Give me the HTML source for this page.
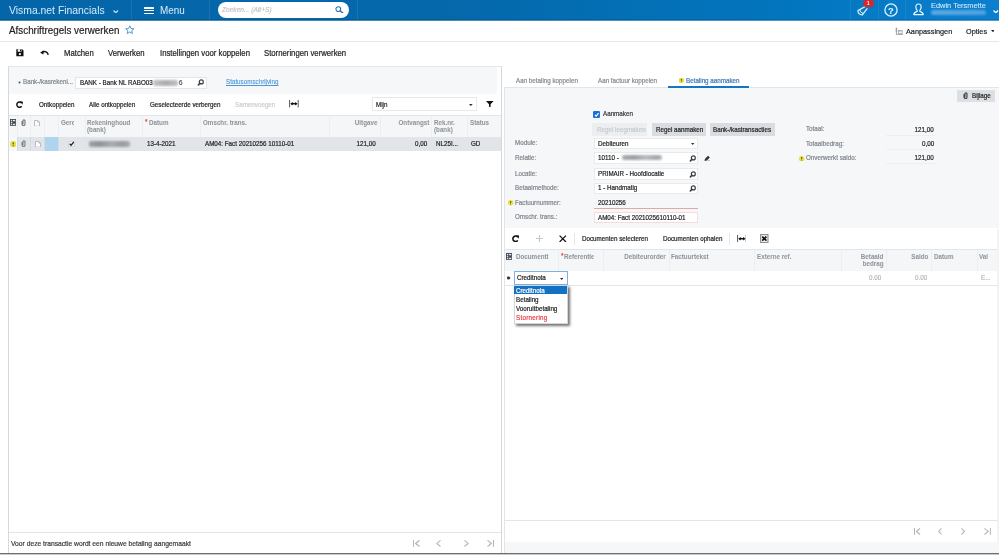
<!DOCTYPE html>
<html lang="nl">
<head>
<meta charset="utf-8">
<title>Afschriftregels verwerken</title>
<style>
*{box-sizing:border-box;margin:0;padding:0}
html,body{width:999px;height:555px;overflow:hidden;background:#fff}
body{font-family:"Liberation Sans",sans-serif;position:relative}
.t{position:absolute;white-space:nowrap;-webkit-text-stroke:0.2px}
.r{position:absolute;display:block}
</style>
</head>
<body>
<div class="r" style="left:0.00px;top:0.00px;width:999.00px;height:20.00px;background:linear-gradient(to right,#0466a8 0%,#0568ab 45%,#0276bf 80%,#0c80cf 100%);"></div>
<div class="r" style="left:0.00px;top:19.00px;width:999.00px;height:1.00px;background:rgba(0,0,0,0.10);"></div>
<div class="r" style="left:0.00px;top:20.00px;width:999.00px;height:1.00px;background:linear-gradient(to right,#4b87b4 0%,#4c89b7 45%,#579bd4 100%);"></div>
<div class="t" style="top:3px;font-size:11.232px;line-height:14px;height:14px;color:#d4ebfb;left:8.50px;transform:scaleX(0.9259);transform-origin:0 50%;-webkit-text-stroke:0;">Visma.net Financials</div>
<svg class="r" style="left:113.30px;top:9.70px" width="5.6" height="3.4" viewBox="0 0 5.6 3.4"><path d="M0.5 0.5 L2.8 2.8 L5.1 0.5" fill="none" stroke="#b5e0fa" stroke-width="1.25"/></svg>
<div class="r" style="left:131.00px;top:0.00px;width:1.00px;height:20.00px;background:rgba(255,255,255,0.09);"></div>
<div class="r" style="left:209.00px;top:0.00px;width:1.00px;height:20.00px;background:rgba(255,255,255,0.09);"></div>
<div class="r" style="left:357.00px;top:0.00px;width:1.00px;height:20.00px;background:rgba(255,255,255,0.09);"></div>
<div class="r" style="left:143.80px;top:7.30px;width:9.80px;height:1.40px;background:#fff;border-radius:0.5px;"></div>
<div class="r" style="left:143.80px;top:9.90px;width:9.80px;height:1.40px;background:#fff;border-radius:0.5px;"></div>
<div class="r" style="left:143.80px;top:12.50px;width:9.80px;height:1.40px;background:#fff;border-radius:0.5px;"></div>
<div class="t" style="top:3px;font-size:10.692px;line-height:14px;height:14px;color:#d8edfb;left:159.80px;transform:scaleX(0.9259);transform-origin:0 50%;-webkit-text-stroke:0;">Menu</div>
<div class="r" style="left:218.30px;top:1.60px;width:131.00px;height:16.20px;background:#fff;border-radius:8.1px;"></div>
<div class="t" style="top:5px;font-size:7.128px;line-height:10px;height:10px;color:#c3c3c6;left:222.20px;transform:scaleX(0.9259);transform-origin:0 50%;font-style:italic;">Zoeken... (Alt+S)</div>
<svg class="r" style="left:334.80px;top:5.50px" width="8.8" height="7.6" viewBox="0 0 8.8 7.6"><circle cx="3.3" cy="3.1" r="2.4" fill="none" stroke="#2a6fb3" stroke-width="1.05"/><path d="M5.1 4.9 L8 7" stroke="#2a6fb3" stroke-width="1.3" stroke-linecap="round"/></svg>
<div class="r" style="left:850.00px;top:0.00px;width:1.00px;height:20.00px;background:rgba(255,255,255,0.07);"></div>
<div class="r" style="left:877.50px;top:0.00px;width:1.00px;height:20.00px;background:rgba(255,255,255,0.07);"></div>
<div class="r" style="left:905.00px;top:0.00px;width:1.00px;height:20.00px;background:rgba(255,255,255,0.07);"></div>
<svg class="r" style="left:856.60px;top:6.40px" width="11" height="10" viewBox="0 0 11 10"><path d="M8.4 0.4 L0.9 4.6 Q1.0 8.6 5.2 9.0 L10.4 2.4" fill="none" stroke="#d6eefc" stroke-width="1.25" stroke-linejoin="round"/><path d="M2.7 3.9 Q3.2 6.6 6.1 7.3" fill="none" stroke="#d6eefc" stroke-width="1.0"/></svg>
<div class="r" style="left:862.50px;top:0.00px;width:11.60px;height:7.20px;background:#d7262e;border-radius:3.6px;"></div>
<div class="t" style="top:0px;font-size:4.752px;line-height:7px;height:7px;color:#fff;left:867.30px;transform:scaleX(0.9259);transform-origin:0 50%;font-weight:bold;-webkit-text-stroke:0.05px;">1</div>
<svg class="r" style="left:884.20px;top:3.40px" width="14" height="14" viewBox="0 0 14 14"><circle cx="7" cy="7" r="6.1" fill="none" stroke="#d9effc" stroke-width="1.35"/></svg>
<div class="t" style="top:4px;font-size:9.409px;line-height:13px;height:13px;color:#e6f4fd;left:888.30px;transform:scaleX(0.9990);transform-origin:0 50%;font-weight:bold;-webkit-text-stroke:0.05px;">?</div>
<svg class="r" style="left:913.00px;top:3.20px" width="11.0" height="12.6" viewBox="0 0 11.8 12.8"><path d="M5.9 0.7 C8.2 0.7 8.9 2.4 8.7 4.4 C8.5 6.2 7.9 7 7.3 7.6 L7.3 8.6 C9 9.2 10.8 9.8 11 12.1 H0.8 C1 9.8 2.8 9.2 4.5 8.6 L4.5 7.6 C3.9 7 3.3 6.2 3.1 4.4 C2.9 2.4 3.6 0.7 5.9 0.7 Z" fill="none" stroke="#e3f3fd" stroke-width="1.3" stroke-linejoin="round"/></svg>
<div class="t" style="top:0px;font-size:8.046px;line-height:11px;height:11px;color:#cfe9fb;left:930.80px;transform:scaleX(0.9259);transform-origin:0 50%;-webkit-text-stroke:0.1px;">Edwin Tersmette</div>
<div class="r" style="left:930.50px;top:10.00px;width:55.00px;height:5.40px;background:linear-gradient(to right,rgba(120,185,235,0.75),rgba(95,170,228,0.8));border-radius:2.5px;filter:blur(1.1px);"></div>
<svg class="r" style="left:993.20px;top:9.60px" width="5.6" height="3.4" viewBox="0 0 5.6 3.4"><path d="M0.5 0.5 L2.8 2.8 L5.1 0.5" fill="none" stroke="#fff" stroke-width="1.3"/></svg>
<div class="t" style="top:23px;font-size:10.638px;line-height:14px;height:14px;color:#1f1f1f;left:8.90px;transform:scaleX(0.9259);transform-origin:0 50%;">Afschriftregels verwerken</div>
<svg class="r" style="left:125.00px;top:25.00px" width="9.6" height="9" viewBox="0 0 9.6 9"><path d="M4.8 0.8 L6 3.5 L8.9 3.8 L6.7 5.7 L7.4 8.5 L4.8 7 L2.2 8.5 L2.9 5.7 L0.7 3.8 L3.6 3.5 Z" fill="none" stroke="#3d8fd0" stroke-width="0.9" stroke-linejoin="round"/></svg>
<svg class="r" style="left:894.80px;top:26.60px" width="8.6" height="8.2" viewBox="0 0 8.6 8.2"><path d="M1.4 0.6 V7.4 H8.2" fill="none" stroke="#8a8a8a" stroke-width="0.8"/><path d="M0.4 1.8 H2.4 M0.4 4 H2.4" stroke="#8a8a8a" stroke-width="0.7"/><rect x="3.4" y="3.4" width="3.8" height="3" fill="none" stroke="#9a9a9a" stroke-width="0.7"/><path d="M3.6 3.6 L5.3 5 L7 3.6" fill="none" stroke="#9a9a9a" stroke-width="0.6"/></svg>
<div class="t" style="top:26px;font-size:7.884px;line-height:11px;height:11px;color:#222;left:906.00px;transform:scaleX(0.9259);transform-origin:0 50%;">Aanpassingen</div>
<div class="t" style="top:26px;font-size:7.884px;line-height:11px;height:11px;color:#222;left:966.00px;transform:scaleX(0.9259);transform-origin:0 50%;">Opties</div>
<svg class="r" style="left:990.60px;top:30.00px" width="3.8" height="2.2" viewBox="0 0 3.8 2.2"><path d="M0 0 H3.8 L1.9 2.2 Z" fill="#222"/></svg>
<div class="r" style="left:0.00px;top:41.00px;width:999.00px;height:1.00px;background:#e6e8ea;"></div>
<svg class="r" style="left:16.00px;top:49.00px" width="8" height="7.9" viewBox="0 0 8 7.9"><path d="M0.3 0.3 H6.2 L7.5 1.6 V7.3 H0.3 Z" fill="#111"/><rect x="1.7" y="0.3" width="3.8" height="2.4" fill="#fff"/><rect x="4" y="0.6" width="1" height="1.7" fill="#111"/><circle cx="3.9" cy="5.1" r="1.1" fill="#fff"/></svg>
<svg class="r" style="left:40.00px;top:50.40px" width="8.8" height="5.2" viewBox="0 0 8.8 5.2"><path d="M2.8 2.0 C5.2 0.9 7.4 1.8 8.3 4.7" fill="none" stroke="#111" stroke-width="1.45"/><path d="M0.1 2.7 L3.5 0.3 L3.5 4.6 Z" fill="#111"/></svg>
<div class="t" style="top:47px;font-size:8.370px;line-height:12px;height:12px;color:#222;left:63.80px;transform:scaleX(0.9259);transform-origin:0 50%;">Matchen</div>
<div class="t" style="top:47px;font-size:8.370px;line-height:12px;height:12px;color:#222;left:108.40px;transform:scaleX(0.9259);transform-origin:0 50%;">Verwerken</div>
<div class="t" style="top:47px;font-size:8.370px;line-height:12px;height:12px;color:#222;left:159.80px;transform:scaleX(0.9259);transform-origin:0 50%;">Instellingen voor koppelen</div>
<div class="t" style="top:47px;font-size:8.370px;line-height:12px;height:12px;color:#222;left:264.40px;transform:scaleX(0.9259);transform-origin:0 50%;">Storneringen verwerken</div>
<div class="r" style="left:8.00px;top:66.00px;width:494.00px;height:488.00px;background:#fff;border:1px solid #e2e5e9;border-left-color:#d5d8dc;border-right-color:#d4d7db;border-bottom:none;"></div>
<div class="r" style="left:9.00px;top:67.00px;width:487.50px;height:27.00px;background:#f5f7f9;"></div>
<svg class="r" style="left:17.60px;top:80.80px" width="3" height="3" viewBox="0 0 3 3"><circle cx="1.5" cy="1.5" r="1.05" fill="#555"/></svg>
<div class="t" style="top:77px;font-size:6.750px;line-height:9px;height:9px;color:#7f868d;left:23.20px;transform:scaleX(0.9259);transform-origin:0 50%;">Bank-/kasrekeni...</div>
<div class="r" style="left:75.20px;top:77.40px;width:131.80px;height:11.40px;background:#fff;border:1px solid #e2e5e9;"></div>
<div class="t" style="top:78px;font-size:6.750px;line-height:9px;height:9px;color:#222;left:79.50px;transform:scaleX(0.9259);transform-origin:0 50%;">BANK - Bank NL RABO03</div>
<div class="r" style="left:153.00px;top:80.00px;width:25.00px;height:5.60px;background:linear-gradient(to right,#c4c4c4,#ababab 50%,#c0c0c0);border-radius:2px;filter:blur(0.9px);"></div>
<div class="t" style="top:78px;font-size:6.750px;line-height:9px;height:9px;color:#555;left:178.60px;transform:scaleX(0.9259);transform-origin:0 50%;">6</div>
<svg class="r" style="left:197.20px;top:79.00px" width="7" height="7" viewBox="0 0 7 7"><circle cx="4.3" cy="2.9" r="2.0" fill="none" stroke="#3a3a3a" stroke-width="1.15"/><path d="M2.9 4.4 L1.3 6.0" stroke="#3a3a3a" stroke-width="1.5" stroke-linecap="round"/></svg>
<div class="t" style="top:77px;font-size:6.750px;line-height:9px;height:9px;color:#4a96d6;left:226.00px;transform:scaleX(0.9259);transform-origin:0 50%;text-decoration:underline;-webkit-text-stroke:0.1px;">Statusomschrijving</div>
<svg class="r" style="left:16.40px;top:101.00px" width="7.0" height="7.0" viewBox="0 0 10 10"><path d="M7.9 2.8 A3.8 3.8 0 1 0 8.1 7.5" fill="none" stroke="#111" stroke-width="2.1"/><path d="M5.8 0.2 L10 0.9 L9.2 5.2 Z" fill="#111"/></svg>
<div class="t" style="top:100px;font-size:6.750px;line-height:9px;height:9px;color:#222;left:39.20px;transform:scaleX(0.9259);transform-origin:0 50%;">Ontkoppelen</div>
<div class="t" style="top:100px;font-size:6.750px;line-height:9px;height:9px;color:#222;left:89.00px;transform:scaleX(0.9259);transform-origin:0 50%;">Alle ontkoppelen</div>
<div class="t" style="top:100px;font-size:6.750px;line-height:9px;height:9px;color:#222;left:150.00px;transform:scaleX(0.9259);transform-origin:0 50%;">Geselecteerde verbergen</div>
<div class="t" style="top:100px;font-size:6.750px;line-height:9px;height:9px;color:#c9cdd1;left:235.00px;transform:scaleX(0.9259);transform-origin:0 50%;">Samenvoegen</div>
<svg class="r" style="left:289.00px;top:100.20px" width="9.8" height="7.4" viewBox="0 0 9.8 7.4"><path d="M0.6 0 V7.4 M9.2 0 V7.4" stroke="#555" stroke-width="1"/><path d="M2.2 3.7 H7.6" stroke="#111" stroke-width="1.5"/><path d="M1.3 3.7 L3.7 1.9 V5.5 Z M8.5 3.7 L6.1 1.9 V5.5 Z" fill="#111"/></svg>
<div class="r" style="left:372.40px;top:97.20px;width:104.80px;height:14.00px;background:#fff;border:1px solid #e6e9ec;"></div>
<div class="t" style="top:100px;font-size:6.750px;line-height:9px;height:9px;color:#222;left:376.00px;transform:scaleX(0.9259);transform-origin:0 50%;">Mijn</div>
<svg class="r" style="left:469.30px;top:103.60px" width="3.7" height="2.1" viewBox="0 0 3.7 2.1"><path d="M0 0 H3.7 L1.85 2.1 Z" fill="#333"/></svg>
<svg class="r" style="left:486.20px;top:100.70px" width="7.6" height="6.4" viewBox="0 0 7.6 6.4"><path d="M0 0 H7.6 L4.6 3.2 V6.4 L3 5.6 V3.2 Z" fill="#111"/></svg>
<div class="r" style="left:9.00px;top:115.00px;width:492.00px;height:21.70px;background:#f5f6f8;border-top:1px solid #e2e5e9;"></div>
<div class="r" style="left:16.50px;top:116.00px;width:1.00px;height:20.70px;background:#eceef1;"></div>
<div class="r" style="left:30.30px;top:116.00px;width:1.00px;height:20.70px;background:#eceef1;"></div>
<div class="r" style="left:44.00px;top:116.00px;width:1.00px;height:20.70px;background:#eceef1;"></div>
<div class="r" style="left:58.30px;top:116.00px;width:1.00px;height:20.70px;background:#eceef1;"></div>
<div class="r" style="left:84.50px;top:116.00px;width:1.00px;height:20.70px;background:#eceef1;"></div>
<div class="r" style="left:142.30px;top:116.00px;width:1.00px;height:20.70px;background:#eceef1;"></div>
<div class="r" style="left:200.00px;top:116.00px;width:1.00px;height:20.70px;background:#eceef1;"></div>
<div class="r" style="left:329.00px;top:116.00px;width:1.00px;height:20.70px;background:#eceef1;"></div>
<div class="r" style="left:380.00px;top:116.00px;width:1.00px;height:20.70px;background:#eceef1;"></div>
<div class="r" style="left:431.30px;top:116.00px;width:1.00px;height:20.70px;background:#eceef1;"></div>
<div class="r" style="left:467.00px;top:116.00px;width:1.00px;height:20.70px;background:#eceef1;"></div>
<svg class="r" style="left:10.00px;top:119.30px" width="6.2" height="6.8" viewBox="0 0 6.2 6.8"><rect x="0.45" y="0.45" width="5.3" height="5.9" fill="#f2f3f5" stroke="#3c4650" stroke-width="0.9"/><path d="M0.4 2.4 H5.8 M0.4 4.4 H5.8 M2.5 0.4 V6.4" stroke="#3c4650" stroke-width="0.75"/><rect x="3" y="2.8" width="2.4" height="1.4" fill="#3c4650"/></svg>
<svg class="r" style="left:21.00px;top:119.10px" width="5.0" height="7.2" viewBox="0 0 4.9 7.0"><path d="M1 2.4 V5 A1.45 1.45 0 0 0 3.9 5 V1.8 A1 1 0 0 0 1.9 1.8 V4.7" fill="none" stroke="#737b84" stroke-width="1.15" stroke-linecap="round"/></svg>
<svg class="r" style="left:34.40px;top:119.60px" width="6" height="6.6" viewBox="0 0 6 6.6"><path d="M0.5 0.5 H3.8 L5.5 2.2 V6.1 H0.5 Z" fill="#fff" stroke="#a7aeb5" stroke-width="0.8"/><path d="M3.8 0.5 V2.2 H5.5" fill="none" stroke="#a7aeb5" stroke-width="0.7"/></svg>
<div class="t" style="top:118px;font-size:6.750px;line-height:9px;height:9px;color:#90959b;left:61.20px;transform:scaleX(0.9259);transform-origin:0 50%;font-weight:bold;-webkit-text-stroke:0.05px;width:13.93px;overflow:hidden;">Gere</div>
<div class="t" style="top:118px;font-size:6.750px;line-height:9px;height:9px;color:#90959b;left:86.80px;transform:scaleX(0.9259);transform-origin:0 50%;font-weight:bold;-webkit-text-stroke:0.05px;">Rekeninghoud</div>
<div class="t" style="top:125px;font-size:6.750px;line-height:9px;height:9px;color:#90959b;left:86.80px;transform:scaleX(0.9259);transform-origin:0 50%;font-weight:bold;-webkit-text-stroke:0.05px;">(bank)</div>
<div class="t" style="top:117px;font-size:6.750px;line-height:9px;height:9px;color:#e03a3a;left:144.60px;transform:scaleX(0.9259);transform-origin:0 50%;font-weight:bold;-webkit-text-stroke:0.05px;">*</div>
<div class="t" style="top:118px;font-size:6.750px;line-height:9px;height:9px;color:#90959b;left:148.50px;transform:scaleX(0.9259);transform-origin:0 50%;font-weight:bold;-webkit-text-stroke:0.05px;">Datum</div>
<div class="t" style="top:118px;font-size:6.750px;line-height:9px;height:9px;color:#90959b;left:202.60px;transform:scaleX(0.9259);transform-origin:0 50%;font-weight:bold;-webkit-text-stroke:0.05px;">Omschr. trans.</div>
<div class="t" style="top:118px;font-size:6.750px;line-height:9px;height:9px;color:#90959b;right:621.60px;transform:scaleX(0.9259);transform-origin:100% 50%;font-weight:bold;-webkit-text-stroke:0.05px;">Uitgave</div>
<div class="t" style="top:118px;font-size:6.750px;line-height:9px;height:9px;color:#90959b;right:569.80px;transform:scaleX(0.9259);transform-origin:100% 50%;font-weight:bold;-webkit-text-stroke:0.05px;">Ontvangst</div>
<div class="t" style="top:118px;font-size:6.750px;line-height:9px;height:9px;color:#90959b;left:434.00px;transform:scaleX(0.9259);transform-origin:0 50%;font-weight:bold;-webkit-text-stroke:0.05px;">Rek.nr.</div>
<div class="t" style="top:125px;font-size:6.750px;line-height:9px;height:9px;color:#90959b;left:434.00px;transform:scaleX(0.9259);transform-origin:0 50%;font-weight:bold;-webkit-text-stroke:0.05px;">(bank)</div>
<div class="t" style="top:118px;font-size:6.750px;line-height:9px;height:9px;color:#90959b;left:469.60px;transform:scaleX(0.9259);transform-origin:0 50%;font-weight:bold;-webkit-text-stroke:0.05px;">Status</div>
<div class="r" style="left:17.00px;top:136.80px;width:484.00px;height:14.20px;background:#e1e5e9;"></div>
<div class="r" style="left:9.00px;top:136.70px;width:8.00px;height:14.00px;background:#f7f8fa;"></div>
<div class="r" style="left:44.40px;top:136.80px;width:14.60px;height:14.20px;background:#aed4f0;"></div>
<div class="r" style="left:16.50px;top:136.70px;width:1.00px;height:14.00px;background:#d5dade;"></div>
<div class="r" style="left:30.30px;top:136.70px;width:1.00px;height:14.00px;background:#d5dade;"></div>
<div class="r" style="left:44.00px;top:136.70px;width:1.00px;height:14.00px;background:#d5dade;"></div>
<div class="r" style="left:58.30px;top:136.70px;width:1.00px;height:14.00px;background:#d5dade;"></div>
<svg class="r" style="left:9.80px;top:140.50px" width="6.4" height="6.4" viewBox="0 0 10 10"><circle cx="5" cy="5" r="4.6" fill="#f2e63a" stroke="#d8cb1c" stroke-width="0.8"/><path d="M5 2.2 V5.6" stroke="#222" stroke-width="1.6"/><circle cx="5" cy="7.4" r="0.9" fill="#222"/></svg>
<svg class="r" style="left:21.20px;top:139.90px" width="5.0" height="7.2" viewBox="0 0 4.9 7.0"><path d="M1 2.4 V5 A1.45 1.45 0 0 0 3.9 5 V1.8 A1 1 0 0 0 1.9 1.8 V4.7" fill="none" stroke="#7b848d" stroke-width="1.15" stroke-linecap="round"/></svg>
<svg class="r" style="left:34.60px;top:140.50px" width="6" height="6.6" viewBox="0 0 6 6.6"><path d="M0.5 0.5 H3.8 L5.5 2.2 V6.1 H0.5 Z" fill="#fff" stroke="#a7aeb5" stroke-width="0.8"/><path d="M3.8 0.5 V2.2 H5.5" fill="none" stroke="#a7aeb5" stroke-width="0.7"/></svg>
<div class="r" style="left:68.20px;top:140.60px;width:6.80px;height:6.90px;background:#f4f5f7;border:1px solid #d4d8dc;"></div>
<svg class="r" style="left:69.00px;top:141.40px" width="5.4" height="5.4" viewBox="0 0 5.4 5.4"><path d="M0.7 2.8 L2.1 4.3 L4.8 0.9" fill="none" stroke="#222" stroke-width="1.3"/></svg>
<div class="r" style="left:88.50px;top:141.20px;width:41.00px;height:5.60px;background:linear-gradient(to right,#9ea2a6,#8f9397 25%,#a9acb0 55%,#979b9f 80%,#a6a9ad);border-radius:2px;filter:blur(1px);"></div>
<div class="t" style="top:139px;font-size:6.750px;line-height:9px;height:9px;color:#222;left:147.00px;transform:scaleX(0.9259);transform-origin:0 50%;">13-4-2021</div>
<div class="t" style="top:139px;font-size:6.750px;line-height:9px;height:9px;color:#222;left:205.00px;transform:scaleX(0.9259);transform-origin:0 50%;">AM04: Fact 20210256 10110-01</div>
<div class="t" style="top:139px;font-size:6.750px;line-height:9px;height:9px;color:#222;right:623.80px;transform:scaleX(0.9259);transform-origin:100% 50%;">121,00</div>
<div class="t" style="top:139px;font-size:6.750px;line-height:9px;height:9px;color:#222;right:572.20px;transform:scaleX(0.9259);transform-origin:100% 50%;">0,00</div>
<div class="t" style="top:139px;font-size:6.750px;line-height:9px;height:9px;color:#222;left:436.00px;transform:scaleX(0.9259);transform-origin:0 50%;">NL25I...</div>
<div class="t" style="top:139px;font-size:6.750px;line-height:9px;height:9px;color:#222;left:471.00px;transform:scaleX(0.9259);transform-origin:0 50%;">GD</div>
<div class="r" style="left:9.00px;top:532.00px;width:492.00px;height:1.00px;background:#e3e6e9;"></div>
<div class="t" style="top:538px;font-size:7.258px;line-height:11px;height:11px;color:#3a3a3a;left:10.80px;transform:scaleX(0.9259);transform-origin:0 50%;">Voor deze transactie wordt een nieuwe betaling aangemaakt</div>
<svg class="r" style="left:412.50px;top:540.35px" width="7.0" height="6.9" viewBox="0 0 7.0 6.9"><path d="M0.5 0 V6.9" stroke="#b3b6ba" stroke-width="1"/><path d="M6.5 0.4 L2.6 3.45 L6.5 6.5" fill="none" stroke="#b3b6ba" stroke-width="1.25"/></svg>
<svg class="r" style="left:435.50px;top:540.35px" width="5.0" height="6.9" viewBox="0 0 5.0 6.9"><path d="M4.5 0.4 L0.8 3.45 L4.5 6.5" fill="none" stroke="#b3b6ba" stroke-width="1.1"/></svg>
<svg class="r" style="left:464.00px;top:540.35px" width="5" height="6.9" viewBox="0 0 5 6.9"><path d="M0.5 0.4 L4.2 3.45 L0.5 6.5" fill="none" stroke="#b3b6ba" stroke-width="1.1"/></svg>
<svg class="r" style="left:487.00px;top:540.35px" width="7" height="6.9" viewBox="0 0 7 6.9"><path d="M0.5 0.4 L4.4 3.45 L0.5 6.5" fill="none" stroke="#b3b6ba" stroke-width="1.1"/><path d="M6.5 0 V6.9" stroke="#b3b6ba" stroke-width="1"/></svg>
<div class="t" style="top:76px;font-size:6.750px;line-height:9px;height:9px;color:#858a8f;left:515.60px;transform:scaleX(0.9259);transform-origin:0 50%;">Aan betaling koppelen</div>
<div class="t" style="top:76px;font-size:6.750px;line-height:9px;height:9px;color:#858a8f;left:598.40px;transform:scaleX(0.9259);transform-origin:0 50%;">Aan factuur koppelen</div>
<svg class="r" style="left:679.00px;top:77.90px" width="4.8" height="4.8" viewBox="0 0 10 10"><rect x="0.5" y="0.5" width="9" height="9" rx="1.6" fill="#f2e230" stroke="#d4c41a" stroke-width="1"/><path d="M5 2 V5.6" stroke="#222" stroke-width="1.7"/><circle cx="5" cy="7.5" r="0.95" fill="#222"/></svg>
<div class="t" style="top:76px;font-size:6.750px;line-height:9px;height:9px;color:#3a78b8;left:685.70px;transform:scaleX(0.9259);transform-origin:0 50%;">Betaling aanmaken</div>
<div class="r" style="left:504.00px;top:87.00px;width:495.00px;height:467.00px;background:#fff;border-left:1px solid #e2e5e9;border-top:1px solid #e2e5e9;"></div>
<div class="r" style="left:505.00px;top:88.00px;width:494.00px;height:140.30px;background:#f5f7f9;"></div>
<div class="r" style="left:668.00px;top:86.00px;width:81.00px;height:1.90px;background:#1873c4;"></div>
<div class="r" style="left:957.20px;top:89.60px;width:37.40px;height:12.40px;background:#dcdfe3;"></div>
<svg class="r" style="left:963.00px;top:92.20px" width="5.0" height="7.2" viewBox="0 0 4.9 7.0"><path d="M1 2.4 V5 A1.45 1.45 0 0 0 3.9 5 V1.8 A1 1 0 0 0 1.9 1.8 V4.7" fill="none" stroke="#444" stroke-width="1.15" stroke-linecap="round"/></svg>
<div class="t" style="top:91px;font-size:6.750px;line-height:9px;height:9px;color:#222;left:972.30px;transform:scaleX(0.9259);transform-origin:0 50%;">Bijlage</div>
<div class="r" style="left:593.40px;top:110.60px;width:7.10px;height:7.00px;background:#1b70d6;border-radius:1.3px;"></div>
<svg class="r" style="left:594.30px;top:111.50px" width="5.4" height="5.4" viewBox="0 0 5.4 5.4"><path d="M0.9 2.8 L2.2 4.2 L4.6 1.2" fill="none" stroke="#fff" stroke-width="1.15"/></svg>
<div class="t" style="top:109px;font-size:6.750px;line-height:9px;height:9px;color:#383838;left:602.80px;transform:scaleX(0.9259);transform-origin:0 50%;">Aanmaken</div>
<div class="r" style="left:592.10px;top:123.40px;width:55.00px;height:12.60px;background:#eceef0;"></div>
<div class="t" style="top:125px;font-size:6.750px;line-height:9px;height:9px;color:#c6cacf;left:596.60px;transform:scaleX(0.9259);transform-origin:0 50%;">Regel leegmaken</div>
<div class="r" style="left:651.50px;top:123.40px;width:54.60px;height:12.60px;background:#d9dce0;"></div>
<div class="t" style="top:125px;font-size:6.750px;line-height:9px;height:9px;color:#222;left:656.20px;transform:scaleX(0.9259);transform-origin:0 50%;">Regel aanmaken</div>
<div class="r" style="left:709.60px;top:123.40px;width:65.80px;height:12.60px;background:#d9dce0;"></div>
<div class="t" style="top:125px;font-size:6.750px;line-height:9px;height:9px;color:#222;left:713.30px;transform:scaleX(0.9259);transform-origin:0 50%;">Bank-/kastransacties</div>
<div class="t" style="top:138px;font-size:6.750px;line-height:9px;height:9px;color:#7f868d;left:515.00px;transform:scaleX(0.9259);transform-origin:0 50%;">Module:</div>
<div class="t" style="top:153px;font-size:6.750px;line-height:9px;height:9px;color:#7f868d;left:515.00px;transform:scaleX(0.9259);transform-origin:0 50%;">Relatie:</div>
<div class="t" style="top:169px;font-size:6.750px;line-height:9px;height:9px;color:#7f868d;left:515.00px;transform:scaleX(0.9259);transform-origin:0 50%;">Locatie:</div>
<div class="t" style="top:183px;font-size:6.750px;line-height:9px;height:9px;color:#7f868d;left:515.00px;transform:scaleX(0.9259);transform-origin:0 50%;">Betaalmethode:</div>
<div class="t" style="top:198px;font-size:6.750px;line-height:9px;height:9px;color:#7f868d;left:515.00px;transform:scaleX(0.9259);transform-origin:0 50%;">Factuurnummer:</div>
<div class="t" style="top:212px;font-size:6.750px;line-height:9px;height:9px;color:#7f868d;left:515.00px;transform:scaleX(0.9259);transform-origin:0 50%;">Omschr. trans.:</div>
<svg class="r" style="left:508.20px;top:200.20px" width="5.4" height="5.4" viewBox="0 0 10 10"><circle cx="5" cy="5" r="4.6" fill="#f2e63a" stroke="#d8cb1c" stroke-width="0.8"/><path d="M5 2.2 V5.6" stroke="#222" stroke-width="1.6"/><circle cx="5" cy="7.4" r="0.9" fill="#222"/></svg>
<div class="r" style="left:593.60px;top:138.00px;width:104.80px;height:11.40px;background:#fff;border:1px solid #e8ebee;"></div>
<div class="t" style="top:139px;font-size:6.750px;line-height:9px;height:9px;color:#222;left:597.60px;transform:scaleX(0.9259);transform-origin:0 50%;">Debiteuren</div>
<svg class="r" style="left:691.20px;top:143.40px" width="3.4" height="2" viewBox="0 0 3.4 2"><path d="M0 0 H3.4 L1.7 2 Z" fill="#333"/></svg>
<div class="r" style="left:593.60px;top:152.40px;width:104.80px;height:11.40px;background:#fff;border:1px solid #e8ebee;"></div>
<div class="t" style="top:153px;font-size:6.750px;line-height:9px;height:9px;color:#222;left:597.60px;transform:scaleX(0.9259);transform-origin:0 50%;">10110 -</div>
<div class="r" style="left:621.50px;top:155.00px;width:40.00px;height:5.40px;background:linear-gradient(to right,#a9acaf,#9b9ea2 30%,#b8babd 60%,#a3a6a9 85%,#b0b3b6);border-radius:2px;filter:blur(1px);"></div>
<svg class="r" style="left:689.20px;top:154.50px" width="7" height="7" viewBox="0 0 7 7"><circle cx="4.3" cy="2.9" r="2.0" fill="none" stroke="#3a3a3a" stroke-width="1.15"/><path d="M2.9 4.4 L1.3 6.0" stroke="#3a3a3a" stroke-width="1.5" stroke-linecap="round"/></svg>
<svg class="r" style="left:703.80px;top:154.80px" width="6.6" height="6.4" viewBox="0 0 6.6 6.4"><path d="M0.9 4.1 L4.0 0.7 L5.9 2.5 L2.8 5.6 L0.5 6.0 Z" fill="#333"/><path d="M3.2 6.1 H6.2" stroke="#444" stroke-width="0.7"/></svg>
<div class="r" style="left:593.60px;top:168.40px;width:104.80px;height:11.40px;background:#fff;border:1px solid #e8ebee;"></div>
<div class="t" style="top:169px;font-size:6.750px;line-height:9px;height:9px;color:#222;left:597.60px;transform:scaleX(0.9259);transform-origin:0 50%;">PRIMAIR - Hoofdlocatie</div>
<svg class="r" style="left:689.20px;top:170.70px" width="7" height="7" viewBox="0 0 7 7"><circle cx="4.3" cy="2.9" r="2.0" fill="none" stroke="#3a3a3a" stroke-width="1.15"/><path d="M2.9 4.4 L1.3 6.0" stroke="#3a3a3a" stroke-width="1.5" stroke-linecap="round"/></svg>
<div class="r" style="left:593.60px;top:182.70px;width:104.80px;height:11.40px;background:#fff;border:1px solid #e8ebee;"></div>
<div class="t" style="top:183px;font-size:6.750px;line-height:9px;height:9px;color:#222;left:597.60px;transform:scaleX(0.9259);transform-origin:0 50%;">1 - Handmatig</div>
<svg class="r" style="left:689.20px;top:184.90px" width="7" height="7" viewBox="0 0 7 7"><circle cx="4.3" cy="2.9" r="2.0" fill="none" stroke="#3a3a3a" stroke-width="1.15"/><path d="M2.9 4.4 L1.3 6.0" stroke="#3a3a3a" stroke-width="1.5" stroke-linecap="round"/></svg>
<div class="t" style="top:198px;font-size:6.750px;line-height:9px;height:9px;color:#222;left:597.60px;transform:scaleX(0.9259);transform-origin:0 50%;">20210256</div>
<div class="r" style="left:593.60px;top:208.20px;width:104.80px;height:1.00px;background:#e9a4a4;"></div>
<div class="r" style="left:593.60px;top:211.50px;width:104.80px;height:11.60px;background:#fff;border:1px solid #f3dede;"></div>
<div class="t" style="top:213px;font-size:6.750px;line-height:9px;height:9px;color:#222;left:597.60px;transform:scaleX(0.9259);transform-origin:0 50%;">AM04: Fact 2021025610110-01</div>
<div class="t" style="top:124px;font-size:6.750px;line-height:9px;height:9px;color:#7f868d;left:806.30px;transform:scaleX(0.9259);transform-origin:0 50%;">Totaal:</div>
<div class="t" style="top:139px;font-size:6.750px;line-height:9px;height:9px;color:#7f868d;left:806.30px;transform:scaleX(0.9259);transform-origin:0 50%;">Totaalbedrag:</div>
<div class="t" style="top:153px;font-size:6.750px;line-height:9px;height:9px;color:#7f868d;left:806.30px;transform:scaleX(0.9259);transform-origin:0 50%;">Onverwerkt saldo:</div>
<svg class="r" style="left:799.30px;top:155.50px" width="5.4" height="5.4" viewBox="0 0 10 10"><circle cx="5" cy="5" r="4.6" fill="#f2e63a" stroke="#d8cb1c" stroke-width="0.8"/><path d="M5 2.2 V5.6" stroke="#222" stroke-width="1.6"/><circle cx="5" cy="7.4" r="0.9" fill="#222"/></svg>
<div class="t" style="top:125px;font-size:6.750px;line-height:9px;height:9px;color:#222;right:65.30px;transform:scaleX(0.9259);transform-origin:100% 50%;">121,00</div>
<div class="t" style="top:139px;font-size:6.750px;line-height:9px;height:9px;color:#222;right:65.30px;transform:scaleX(0.9259);transform-origin:100% 50%;">0,00</div>
<div class="t" style="top:153px;font-size:6.750px;line-height:9px;height:9px;color:#222;right:65.30px;transform:scaleX(0.9259);transform-origin:100% 50%;">121,00</div>
<div class="r" style="left:885.50px;top:134.70px;width:49.00px;height:1.00px;background:#edeff2;"></div>
<div class="r" style="left:885.50px;top:148.70px;width:49.00px;height:1.00px;background:#edeff2;"></div>
<div class="r" style="left:885.50px;top:162.70px;width:49.00px;height:1.00px;background:#edeff2;"></div>
<div class="r" style="left:505.00px;top:228.30px;width:494.00px;height:20.60px;background:#fff;"></div>
<svg class="r" style="left:512.00px;top:234.80px" width="7.2" height="7.2" viewBox="0 0 10 10"><path d="M7.9 2.8 A3.8 3.8 0 1 0 8.1 7.5" fill="none" stroke="#111" stroke-width="2.1"/><path d="M5.8 0.2 L10 0.9 L9.2 5.2 Z" fill="#111"/></svg>
<svg class="r" style="left:536.00px;top:234.80px" width="7" height="7" viewBox="0 0 7 7"><path d="M3.5 0 V7 M0 3.5 H7" stroke="#c4c8cc" stroke-width="1.1"/></svg>
<svg class="r" style="left:559.00px;top:234.60px" width="7.6" height="7.6" viewBox="0 0 7.6 7.6"><path d="M0.6 0.6 L7 7 M7 0.6 L0.6 7" stroke="#111" stroke-width="1.25"/></svg>
<div class="r" style="left:574.00px;top:232.50px;width:1.00px;height:12.00px;background:#e3e6e9;"></div>
<div class="t" style="top:234px;font-size:6.750px;line-height:9px;height:9px;color:#222;left:582.00px;transform:scaleX(0.9259);transform-origin:0 50%;">Documenten selecteren</div>
<div class="t" style="top:234px;font-size:6.750px;line-height:9px;height:9px;color:#222;left:662.50px;transform:scaleX(0.9259);transform-origin:0 50%;">Documenten ophalen</div>
<div class="r" style="left:729.00px;top:232.50px;width:1.00px;height:12.00px;background:#e3e6e9;"></div>
<svg class="r" style="left:736.60px;top:234.80px" width="9.8" height="7.4" viewBox="0 0 9.8 7.4"><path d="M0.6 0 V7.4 M9.2 0 V7.4" stroke="#555" stroke-width="1"/><path d="M2.2 3.7 H7.6" stroke="#111" stroke-width="1.5"/><path d="M1.3 3.7 L3.7 1.9 V5.5 Z M8.5 3.7 L6.1 1.9 V5.5 Z" fill="#111"/></svg>
<svg class="r" style="left:760.30px;top:233.60px" width="8.6" height="9.2" viewBox="0 0 8.6 9.2"><rect x="0.6" y="0.6" width="7.4" height="8" fill="#f2f2f2" stroke="#8e8e8e" stroke-width="1.1"/><path d="M2.2 2.6 L6.4 6.6 M6.4 2.6 L2.2 6.6" stroke="#111" stroke-width="1.7"/></svg>
<div class="r" style="left:505.00px;top:248.90px;width:491.50px;height:22.00px;background:#f5f6f8;border-top:1px solid #e2e5e9;"></div>
<div class="r" style="left:558.40px;top:250.00px;width:1.00px;height:20.90px;background:#eceef1;"></div>
<div class="r" style="left:603.00px;top:250.00px;width:1.00px;height:20.90px;background:#eceef1;"></div>
<div class="r" style="left:668.50px;top:250.00px;width:1.00px;height:20.90px;background:#eceef1;"></div>
<div class="r" style="left:753.90px;top:250.00px;width:1.00px;height:20.90px;background:#eceef1;"></div>
<div class="r" style="left:840.70px;top:250.00px;width:1.00px;height:20.90px;background:#eceef1;"></div>
<div class="r" style="left:885.60px;top:250.00px;width:1.00px;height:20.90px;background:#eceef1;"></div>
<div class="r" style="left:930.50px;top:250.00px;width:1.00px;height:20.90px;background:#eceef1;"></div>
<div class="r" style="left:976.90px;top:250.00px;width:1.00px;height:20.90px;background:#eceef1;"></div>
<svg class="r" style="left:506.00px;top:253.00px" width="6.2" height="6.8" viewBox="0 0 6.2 6.8"><rect x="0.45" y="0.45" width="5.3" height="5.9" fill="#f2f3f5" stroke="#3c4650" stroke-width="0.9"/><path d="M0.4 2.4 H5.8 M0.4 4.4 H5.8 M2.5 0.4 V6.4" stroke="#3c4650" stroke-width="0.75"/><rect x="3" y="2.8" width="2.4" height="1.4" fill="#3c4650"/></svg>
<div class="t" style="top:252px;font-size:6.750px;line-height:9px;height:9px;color:#90959b;left:516.00px;transform:scaleX(0.9259);transform-origin:0 50%;font-weight:bold;-webkit-text-stroke:0.05px;width:35.21px;overflow:hidden;">Documentty</div>
<div class="t" style="top:251px;font-size:6.750px;line-height:9px;height:9px;color:#e03a3a;left:560.80px;transform:scaleX(0.9259);transform-origin:0 50%;font-weight:bold;-webkit-text-stroke:0.05px;">*</div>
<div class="t" style="top:252px;font-size:6.750px;line-height:9px;height:9px;color:#90959b;left:563.90px;transform:scaleX(0.9259);transform-origin:0 50%;font-weight:bold;-webkit-text-stroke:0.05px;width:32.18px;overflow:hidden;">Referentie</div>
<div class="t" style="top:252px;font-size:6.750px;line-height:9px;height:9px;color:#90959b;right:333.60px;transform:scaleX(0.9259);transform-origin:100% 50%;font-weight:bold;-webkit-text-stroke:0.05px;">Debiteurorder</div>
<div class="t" style="top:252px;font-size:6.750px;line-height:9px;height:9px;color:#90959b;left:670.70px;transform:scaleX(0.9259);transform-origin:0 50%;font-weight:bold;-webkit-text-stroke:0.05px;">Factuurtekst</div>
<div class="t" style="top:252px;font-size:6.750px;line-height:9px;height:9px;color:#90959b;left:756.90px;transform:scaleX(0.9259);transform-origin:0 50%;font-weight:bold;-webkit-text-stroke:0.05px;">Externe ref.</div>
<div class="t" style="top:252px;font-size:6.750px;line-height:9px;height:9px;color:#90959b;right:115.70px;transform:scaleX(0.9259);transform-origin:100% 50%;font-weight:bold;-webkit-text-stroke:0.05px;">Betaald</div>
<div class="t" style="top:259px;font-size:6.750px;line-height:9px;height:9px;color:#90959b;right:115.70px;transform:scaleX(0.9259);transform-origin:100% 50%;font-weight:bold;-webkit-text-stroke:0.05px;">bedrag</div>
<div class="t" style="top:252px;font-size:6.750px;line-height:9px;height:9px;color:#90959b;right:70.50px;transform:scaleX(0.9259);transform-origin:100% 50%;font-weight:bold;-webkit-text-stroke:0.05px;">Saldo</div>
<div class="t" style="top:252px;font-size:6.750px;line-height:9px;height:9px;color:#90959b;left:933.50px;transform:scaleX(0.9259);transform-origin:0 50%;font-weight:bold;-webkit-text-stroke:0.05px;">Datum</div>
<div class="t" style="top:252px;font-size:6.750px;line-height:9px;height:9px;color:#90959b;left:979.00px;transform:scaleX(0.9259);transform-origin:0 50%;font-weight:bold;-webkit-text-stroke:0.05px;">Val</div>
<div class="r" style="left:505.00px;top:285.00px;width:491.50px;height:1.00px;background:#e3e6e9;"></div>
<svg class="r" style="left:507.40px;top:276.40px" width="3.8" height="3.8" viewBox="0 0 3.8 3.8"><path d="M0.3 0.3 L3.5 1.9 L0.3 3.5 Z" fill="#333"/><circle cx="1.7" cy="1.9" r="1.5" fill="#333"/></svg>
<div class="r" style="left:513.50px;top:271.30px;width:54.20px;height:13.50px;background:#fff;border:1px solid #7db1e3;"></div>
<div class="t" style="top:273px;font-size:6.750px;line-height:9px;height:9px;color:#222;left:517.20px;transform:scaleX(0.9259);transform-origin:0 50%;">Creditnota</div>
<svg class="r" style="left:559.60px;top:277.60px" width="3.4" height="2" viewBox="0 0 3.4 2"><path d="M0 0 H3.4 L1.7 2 Z" fill="#333"/></svg>
<div class="t" style="top:273px;font-size:6.750px;line-height:9px;height:9px;color:#b4b9be;right:117.80px;transform:scaleX(0.9259);transform-origin:100% 50%;">0.00</div>
<div class="t" style="top:273px;font-size:6.750px;line-height:9px;height:9px;color:#b4b9be;right:72.20px;transform:scaleX(0.9259);transform-origin:100% 50%;">0.00</div>
<div class="t" style="top:273px;font-size:6.750px;line-height:9px;height:9px;color:#b4b9be;left:980.50px;transform:scaleX(0.9259);transform-origin:0 50%;">E...</div>
<div class="r" style="left:513.70px;top:285.20px;width:54.00px;height:38.40px;background:#fff;border:1px solid #d3d7db;box-shadow:1.5px 2px 2.5px rgba(0,0,0,0.55);"></div>
<div class="r" style="left:514.20px;top:285.70px;width:53.00px;height:8.80px;background:#1470c2;"></div>
<div class="t" style="top:286px;font-size:6.750px;line-height:9px;height:9px;color:#fff;left:516.00px;transform:scaleX(0.9259);transform-origin:0 50%;">Creditnota</div>
<div class="t" style="top:295px;font-size:6.750px;line-height:9px;height:9px;color:#222;left:516.00px;transform:scaleX(0.9259);transform-origin:0 50%;">Betaling</div>
<div class="t" style="top:304px;font-size:6.750px;line-height:9px;height:9px;color:#222;left:516.00px;transform:scaleX(0.9259);transform-origin:0 50%;">Vooruitbetaling</div>
<div class="t" style="top:313px;font-size:6.750px;line-height:9px;height:9px;color:#e53c48;left:516.00px;transform:scaleX(0.9259);transform-origin:0 50%;letter-spacing:0.3px;">Stornering</div>
<div class="r" style="left:505.00px;top:520.40px;width:494.00px;height:1.00px;background:#e3e6e9;"></div>
<svg class="r" style="left:914.00px;top:528.15px" width="6.5" height="6.9" viewBox="0 0 6.5 6.9"><path d="M0.5 0 V6.9" stroke="#b3b6ba" stroke-width="1"/><path d="M6.0 0.4 L2.6 3.45 L6.0 6.5" fill="none" stroke="#b3b6ba" stroke-width="1.25"/></svg>
<svg class="r" style="left:937.80px;top:528.15px" width="4.0" height="6.9" viewBox="0 0 4.0 6.9"><path d="M3.5 0.4 L0.8 3.45 L3.5 6.5" fill="none" stroke="#b3b6ba" stroke-width="1.1"/></svg>
<svg class="r" style="left:961.00px;top:528.15px" width="4.2999999999999545" height="6.9" viewBox="0 0 4.2999999999999545 6.9"><path d="M0.5 0.4 L3.4999999999999547 3.45 L0.5 6.5" fill="none" stroke="#b3b6ba" stroke-width="1.1"/></svg>
<svg class="r" style="left:983.70px;top:528.15px" width="6.899999999999977" height="6.9" viewBox="0 0 6.899999999999977 6.9"><path d="M0.5 0.4 L4.299999999999978 3.45 L0.5 6.5" fill="none" stroke="#b3b6ba" stroke-width="1.1"/><path d="M6.399999999999977 0 V6.9" stroke="#b3b6ba" stroke-width="1"/></svg>
<div class="r" style="left:505.00px;top:542.30px;width:494.00px;height:11.00px;background:#f5f7f9;"></div>
<div class="r" style="left:996.50px;top:229.00px;width:2.50px;height:313.00px;background:#f1f3f5;"></div>
<div class="r" style="left:0.00px;top:553.00px;width:999.00px;height:1.00px;background:#6e6e6e;"></div>
<div class="r" style="left:0.00px;top:554.00px;width:999.00px;height:1.00px;background:#c9c9c9;"></div>
</body>
</html>
